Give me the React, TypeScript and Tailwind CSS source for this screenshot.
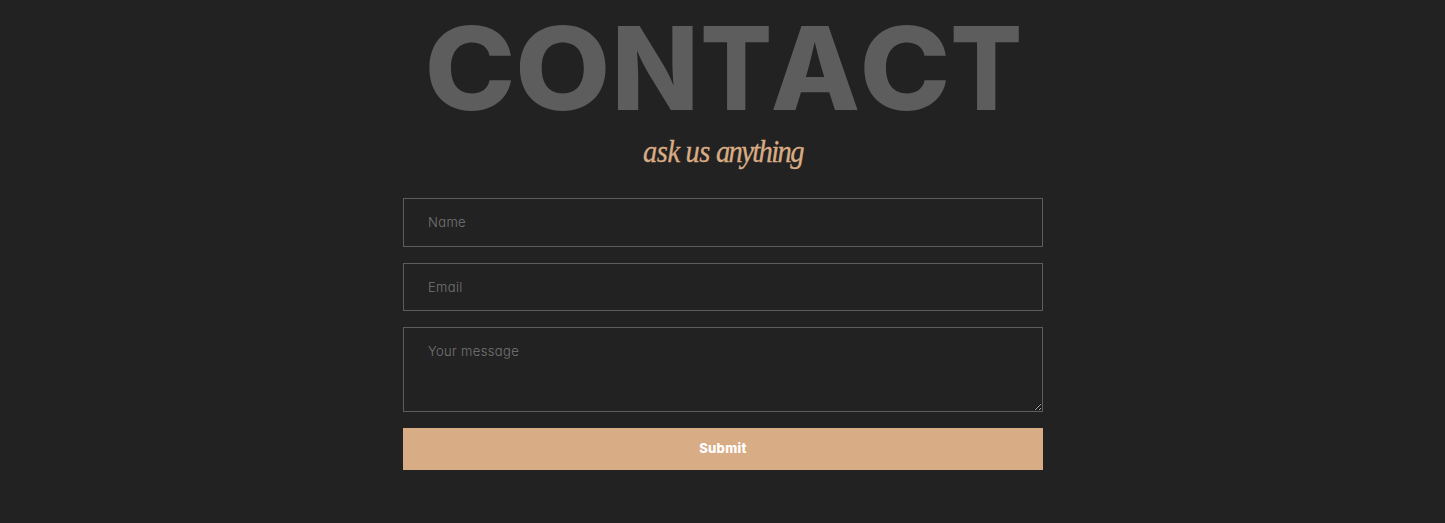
const title = [
  { ch: "C", cell: "w-[90px]", glyph: "scale-x-[1.06]" },
  { ch: "O", cell: "w-[96px]", glyph: "scale-x-[1.07]" },
  { ch: "N", cell: "w-[89px]", glyph: "scale-x-[0.99]" },
  { ch: "T", cell: "w-[73px]", glyph: "scale-x-[0.92]" },
  { ch: "A", cell: "w-[85px]", glyph: "scale-x-[1.01]" },
  { ch: "C", cell: "w-[94px]", glyph: "scale-x-[1.06]" },
  { ch: "T", cell: "w-[70px]", glyph: "scale-x-[0.92]" },
];

const field =
  "block w-full rounded-none border border-[#5d5d5d] bg-transparent px-6 text-[13px] font-light tracking-[0.35px] text-white outline-none placeholder:text-[#757575] placeholder:opacity-100";

export default function App() {
  return (
    <main className="h-[523px] overflow-hidden bg-[#222222] pl-px font-['Inter',sans-serif] [font-feature-settings:'cv11','ss03']">
      <div className="mx-auto flex w-[640px] flex-col pt-[8px]">
        <h1 className="flex h-[120px] justify-center text-[115.5px] leading-[120px] font-extrabold text-[#5d5d5d]">
          {title.map((l, i) => (
            <span key={i} className={`${l.cell} flex justify-center`}>
              <span className={`block ${l.glyph}`}>{l.ch}</span>
            </span>
          ))}
        </h1>
        <p className="mb-[22px] flex h-[48px] scale-y-110 items-center justify-center gap-[6px] font-['Liberation_Serif',serif] text-[28.5px] leading-[48px] tracking-[-1.6px] text-[#d9ac84] italic [-webkit-text-stroke:0.3px_#d9ac84]">
          <span className="tracking-[-0.5px]">ask</span>
          <span className="tracking-[-0.5px]">us</span>
          <span>anything</span>
        </p>
        <form className="flex flex-col gap-4" onSubmit={(e) => e.preventDefault()}>
          <input className={`${field} h-[49px] pb-px`} placeholder="Name" />
          <input className={`${field} h-[48px] pb-px`} placeholder="Email" />
          <textarea className={`${field} h-[85px] resize-y py-[13px] leading-5`} placeholder="Your message" />
          <button className="h-[42px] bg-[#d8ac85] text-[13px] font-extrabold tracking-[0.3px] text-white">Submit</button>
        </form>
      </div>
    </main>
  );
}
